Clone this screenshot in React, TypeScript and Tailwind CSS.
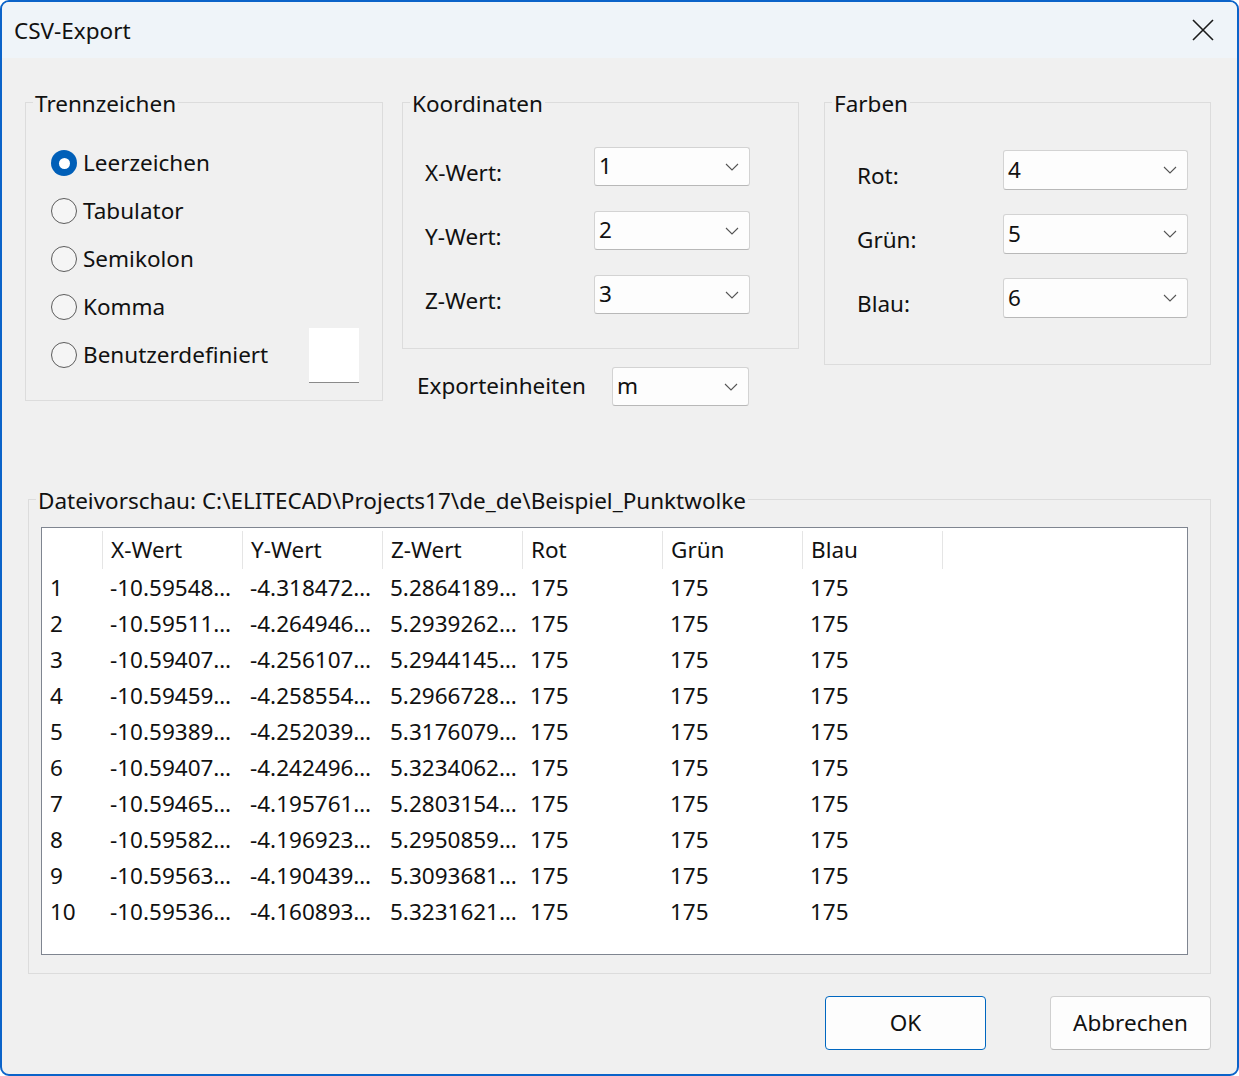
import React from "react";

const font = { fontFamily: '"Noto Sans", "Open Sans", sans-serif' };

function Chevron() {
  return (
    <svg width="14" height="8" viewBox="0 0 14 8" className="shrink-0">
      <path d="M1 1 L7 7 L13 1" fill="none" stroke="#555" strokeWidth="1.1" />
    </svg>
  );
}

function Combo({ value, w, h }: { value: string; w: string; h: string }) {
  return (
    <div
      className={`${w} ${h} bg-[#fdfdfd] border border-[#d3d3d3] border-b-[#b8b8b8] rounded-[3px] flex items-center justify-between pl-[4px] pr-[10px]`}
    >
      <span>{value}</span>
      <Chevron />
    </div>
  );
}

function Radio({ checked, label }: { checked?: boolean; label: string }) {
  return (
    <div className="flex items-center h-[48px]">
      {checked ? (
        <div className="w-[26px] h-[26px] rounded-full bg-[#005fb8] flex items-center justify-center">
          <div className="w-[11px] h-[11px] rounded-full bg-white" />
        </div>
      ) : (
        <div className="w-[26px] h-[26px] rounded-full border-[1.5px] border-[#5c5c5c] bg-[#f5f5f5]" />
      )}
      <span className="ml-[6px]">{label}</span>
    </div>
  );
}

function Group({
  title,
  className,
  children,
}: {
  title: string;
  className: string;
  children?: React.ReactNode;
}) {
  return (
    <div className={`relative border border-[#dcdcdc] ${className}`}>
      <span className="absolute left-[7px] -top-[13px] leading-[28px] bg-[#f0f0f0] px-[2px]">
        {title}
      </span>
      {children}
    </div>
  );
}

const rows = [
  ["1", "-10.59548…", "-4.318472…", "5.2864189…"],
  ["2", "-10.59511…", "-4.264946…", "5.2939262…"],
  ["3", "-10.59407…", "-4.256107…", "5.2944145…"],
  ["4", "-10.59459…", "-4.258554…", "5.2966728…"],
  ["5", "-10.59389…", "-4.252039…", "5.3176079…"],
  ["6", "-10.59407…", "-4.242496…", "5.3234062…"],
  ["7", "-10.59465…", "-4.195761…", "5.2803154…"],
  ["8", "-10.59582…", "-4.196923…", "5.2950859…"],
  ["9", "-10.59563…", "-4.190439…", "5.3093681…"],
  ["10", "-10.59536…", "-4.160893…", "5.3231621…"],
];

const headers = ["X-Wert", "Y-Wert", "Z-Wert", "Rot", "Grün", "Blau"];

export default function App() {
  return (
    <div
      style={font}
      className="w-[1239px] h-[1076px] border-2 border-[#0b63c9] rounded-[9px] overflow-hidden bg-[#f0f0f0] flex flex-col text-[22.5px] text-[#111] leading-none"
    >
      {/* Title bar */}
      <div className="h-[56px] bg-[#eff4f9] flex items-center justify-between pl-[12px] pr-[23px] shrink-0">
        <span className="text-[22.5px] mt-[2px]">CSV-Export</span>
        <svg width="22" height="22" viewBox="0 0 22 22">
          <path d="M1 1 L21 21 M21 1 L1 21" stroke="#1a1a1a" strokeWidth="1.6" />
        </svg>
      </div>

      {/* Body */}
      <div className="flex flex-col flex-1">
        {/* Top row */}
        <div className="flex items-start mt-[44px] ml-[23px]">
          <Group title="Trennzeichen" className="w-[358px] h-[299px] pt-[36px] pl-[25px] pr-[23px]">
            <Radio checked label="Leerzeichen" />
            <Radio label="Tabulator" />
            <Radio label="Semikolon" />
            <Radio label="Komma" />
            <div className="flex items-center justify-between h-[48px]">
              <Radio label="Benutzerdefiniert" />
              <div className="w-[50px] h-[55px] shrink-0 bg-white border-b border-[#8a8a8a]" />
            </div>
          </Group>

          <div className="flex flex-col ml-[19px]">
            <Group title="Koordinaten" className="w-[397px] h-[247px] pt-[44px] pl-[22px]">
              {["1", "2", "3"].map((v, i) => (
                <div key={v} className={`flex items-start ${i > 0 ? "mt-[25px]" : ""}`}>
                  <span className="w-[169px] pt-[15px]">{["X-Wert:", "Y-Wert:", "Z-Wert:"][i]}</span>
                  <Combo value={v} w="w-[156px]" h="h-[39px]" />
                </div>
              ))}
            </Group>
            <div className="flex items-center mt-[18px] ml-[15px]">
              <span className="w-[195px]">Exporteinheiten</span>
              <Combo value="m" w="w-[137px]" h="h-[39px]" />
            </div>
          </div>

          <Group title="Farben" className="ml-[25px] w-[387px] h-[263px] pt-[47px] pl-[32px]">
            {["4", "5", "6"].map((v, i) => (
              <div key={v} className={`flex items-start ${i > 0 ? "mt-[24px]" : ""}`}>
                <span className="w-[146px] pt-[15px]">{["Rot:", "Grün:", "Blau:"][i]}</span>
                <Combo value={v} w="w-[185px]" h="h-[40px]" />
              </div>
            ))}
          </Group>
        </div>

        {/* Preview group */}
        <Group
          title="Dateivorschau: C:\ELITECAD\Projects17\de_de\Beispiel_Punktwolke"
          className="mt-[93px] ml-[26px] w-[1183px] h-[475px] pt-[27px] pl-[12px]"
        >
          <div className="w-[1147px] h-[428px] bg-white border border-[#7f8590] overflow-hidden">
            <div className="flex h-[42px] items-center">
              <div className="w-[60px] h-full" />
              {headers.map((h) => (
                <div key={h} className="w-[140px] h-[38px] mt-[2px] border-l border-[#e5e5e5] flex items-center pl-[8px]">
                  {h}
                </div>
              ))}
              <div className="h-[38px] mt-[2px] border-l border-[#e5e5e5]" />
            </div>
            {rows.map((r) => (
              <div key={r[0]} className="flex h-[36px] items-center whitespace-nowrap">
                <div className="w-[60px] pl-[8px]">{r[0]}</div>
                <div className="w-[140px] pl-[8px]">{r[1]}</div>
                <div className="w-[140px] pl-[8px]">{r[2]}</div>
                <div className="w-[140px] pl-[8px]">{r[3]}</div>
                <div className="w-[140px] pl-[8px]">175</div>
                <div className="w-[140px] pl-[8px]">175</div>
                <div className="w-[140px] pl-[8px]">175</div>
              </div>
            ))}
          </div>
        </Group>

        {/* Buttons */}
        <div className="flex justify-end mt-[22px] mr-[26px] gap-[64px]">
          <button className="w-[161px] h-[54px] bg-[#fdfdfd] border border-[#0067c0] rounded-[4px] text-[22.5px]">
            OK
          </button>
          <button className="w-[161px] h-[54px] bg-[#fdfdfd] border border-[#d0d0d0] border-b-[#b8b8b8] rounded-[4px] text-[22.5px]">
            Abbrechen
          </button>
        </div>
      </div>
    </div>
  );
}
